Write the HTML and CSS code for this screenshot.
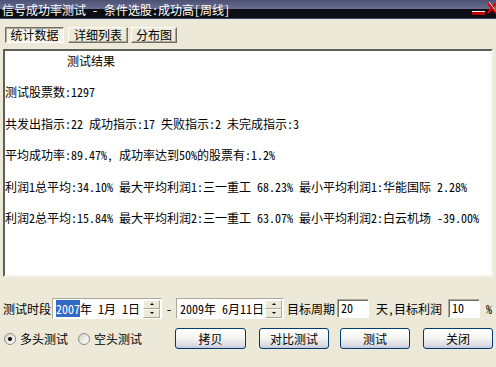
FILE: index.html
```html
<!DOCTYPE html>
<html lang="zh-CN">
<head>
    <meta charset="utf-8">
    <title>信号成功率测试</title>
    <link rel="stylesheet" href="styles.css">
</head>
<body>
    <div class="window">
        <div class="titlebar">
            <span class="title">信号成功率测试 - 条件选股:成功高[周线]</span>
            <svg class="caption" width="26" height="18" viewBox="0 0 26 18">
                <!-- 最小化 -->
                <rect x="2" y="11" width="13" height="4" fill="#c00000"/>
                <rect x="2" y="11" width="13" height="1" fill="#ffffff"/>
                <!-- 关闭 -->
                <path d="M18 3 L26 13 M26 3 L18 13" stroke="#e00000" stroke-width="2.4"/>
                <path d="M19 2 L26 11" stroke="#ffffff" stroke-width="0.8"/>
            </svg>
        </div>

        <div class="client">
            <div class="tabs">
                <button class="tab active tab-wide">统计数据</button>
                <button class="tab tab-wide2">详细列表</button>
                <button class="tab tab-small">分布图</button>
            </div>

            <div class="result">
                <p class="heading">测试结果</p>
                <p>测试股票数:1297</p>
                <p>共发出指示:22 成功指示:17 失败指示:2 未完成指示:3</p>
                <p>平均成功率:89.47%, 成功率达到50%的股票有:1.2%</p>
                <p>利润1总平均:34.10% 最大平均利润1:三一重工 68.23% 最小平均利润1:华能国际 2.28%</p>
                <p>利润2总平均:15.84% 最大平均利润2:三一重工 63.07% 最小平均利润2:白云机场 -39.00%</p>
            </div>

            <div class="row period">
                <span class="label">测试时段</span>
                <div class="datebox date-from">
                    <span class="datetext"><span class="sel">2007</span>年 1月 1日</span>
                    <div class="spin">
                        <span class="spin-btn"><i class="arr up"></i></span>
                        <span class="spin-btn"><i class="arr down"></i></span>
                    </div>
                </div>
                <span class="dash">-</span>
                <div class="datebox date-to">
                    <span class="datetext">2009年 6月11日</span>
                    <div class="spin">
                        <span class="spin-btn"><i class="arr up"></i></span>
                        <span class="spin-btn"><i class="arr down"></i></span>
                    </div>
                </div>
                <span class="label goal">目标周期</span>
                <span class="field field-days">20</span>
                <span class="label days">天,目标利润</span>
                <span class="field field-profit">10</span>
                <span class="label pct">%</span>
            </div>

            <div class="row actions">
                <div class="radios">
                    <label class="radio checked"><span class="dot"></span>多头测试</label>
                    <label class="radio radio-short"><span class="dot"></span>空头测试</label>
                </div>
                <button class="btn btn-copy">拷贝</button>
                <button class="btn btn-compare">对比测试</button>
                <button class="btn btn-test">测试</button>
                <button class="btn btn-close">关闭</button>
            </div>
        </div>
    </div>
</body>
</html>
```

FILE: styles.css
```css
body {
    margin: 0;
    background: #ece9d8;
    font-family: "Noto Sans Mono CJK SC", "Noto Sans CJK SC", "Liberation Sans", sans-serif;
    font-size: 12px;
    color: #000;
}
.window {
    width: 496px;
    height: 367px;
    overflow: hidden;
}
.titlebar {
    height: 18px;
    border-bottom: 1px solid #3b4b6b;
    background: linear-gradient(to bottom, #4c5172 0, #6a6f93 9px, #0c0e13 9px, #0c0e13 18px);
    display: flex;
    align-items: center;
}
.title {
    color: #fff;
    font-size: 12px;
    padding-left: 2px;
    white-space: pre;
}
.caption {
    margin-left: auto;
}

.client {
    padding-top: 8px;
}
.tabs {
    display: flex;
    height: 16px;
    padding-left: 5px;
}
.tab {
    font: inherit;
    margin: 0;
    padding: 0;
    height: 16px;
    line-height: 14px;
    background: #ece9d8;
    border: 1px solid;
    border-color: #fff #716f64 #716f64 #fff;
    box-shadow: inset -1px -1px 0 #aca899;
    color: #000;
}
.tab.active {
    border-color: #716f64 #fff #fff #716f64;
    box-shadow: inset 1px 1px 0 #aca899;
    background: repeating-conic-gradient(#ffffff 0 25%, #ece9d8 0 50%) 0 0 / 2px 2px;
}
.tab-wide { width: 59px; }
.tab-wide2 { width: 60px; margin-left: 4px; }
.tab-small { width: 46px; margin-left: 3px; }

.result {
    margin: 6px 0 0 3px;
    width: 486px;
    height: 221px;
    background: #fff;
    border: 2px solid;
    border-color: #5e5d58 #f4f3ee #f4f3ee #5e5d58;
    padding-top: 3px;
}
.result p {
    margin: 0;
    height: 31.4px;
    line-height: 14px;
    white-space: nowrap;
}
.result .heading {
    padding-left: 62px;
}

.row {
    display: flex;
    align-items: center;
}
.period {
    margin-top: 20px;
    height: 23px;
    padding-left: 3px;
}
.label {
    white-space: nowrap;
}
.period > .label:first-child {
    width: 49px;
}
.datebox {
    height: 19px;
    border: 1px solid;
    border-color: #aca899 #fff #fff #aca899;
    background: #fff;
    display: flex;
    align-items: center;
    justify-content: space-between;
}
.date-from { width: 108px; }
.date-to { width: 106px; }
.datetext {
    padding-left: 3px;
    white-space: pre;
}
.sel {
    background: #316ac5;
    color: #fff;
}
.spin {
    display: flex;
    flex-direction: column;
    width: 17px;
    height: 18px;
    margin-right: 1px;
}
.spin-btn {
    flex: 1;
    background: #ece9d8;
    border: 1px solid;
    border-color: #fff #aca899 #aca899 #fff;
    display: flex;
    align-items: center;
    justify-content: center;
}
.arr {
    width: 0;
    height: 0;
    border-left: 2px solid transparent;
    border-right: 2px solid transparent;
}
.arr.up { border-bottom: 2px solid #000; }
.arr.down { border-top: 2px solid #000; }
.dash {
    width: 14px;
    text-align: center;
}
.goal { margin-left: 3px; }
.field {
    width: 27px;
    height: 17px;
    border: 1px solid;
    border-color: #aca899 #fff #fff #aca899;
    box-shadow: inset 1px 1px 0 #716f64;
    background: #fff;
    padding-left: 3px;
    line-height: 16px;
}
.field-days { margin-left: 2px; }
.days { margin-left: 7px; width: 72px; }
.pct { margin-left: 6px; }

.actions {
    margin-top: 8px;
    height: 21px;
    padding-left: 4px;
}
.radios {
    width: 171px;
    display: flex;
    align-items: center;
}
.radio {
    display: flex;
    align-items: center;
    white-space: nowrap;
}
.radio-short { margin-left: 10px; }
.dot {
    width: 10px;
    height: 10px;
    border-radius: 50%;
    border: 1px solid #8d8d86;
    background: linear-gradient(135deg, #d6d5cc, #ffffff);
    margin-right: 4px;
    position: relative;
}
.radio.checked .dot::after {
    content: "";
    position: absolute;
    left: 3px;
    top: 3px;
    width: 4px;
    height: 4px;
    border-radius: 50%;
    background: #000;
}
.btn {
    font: inherit;
    margin: 0;
    padding: 0;
    height: 21px;
    border: 1px solid #003c74;
    border-radius: 3px;
    background: linear-gradient(to bottom, #ffffff 0, #f4f4f0 50%, #dcdce6 85%, #c8c8d8 100%);
    color: #000;
}
.btn-copy { width: 71px; }
.btn-compare { width: 70px; margin-left: 13px; }
.btn-test { width: 70px; margin-left: 11px; }
.btn-close { width: 70px; margin-left: 13px; }
```
